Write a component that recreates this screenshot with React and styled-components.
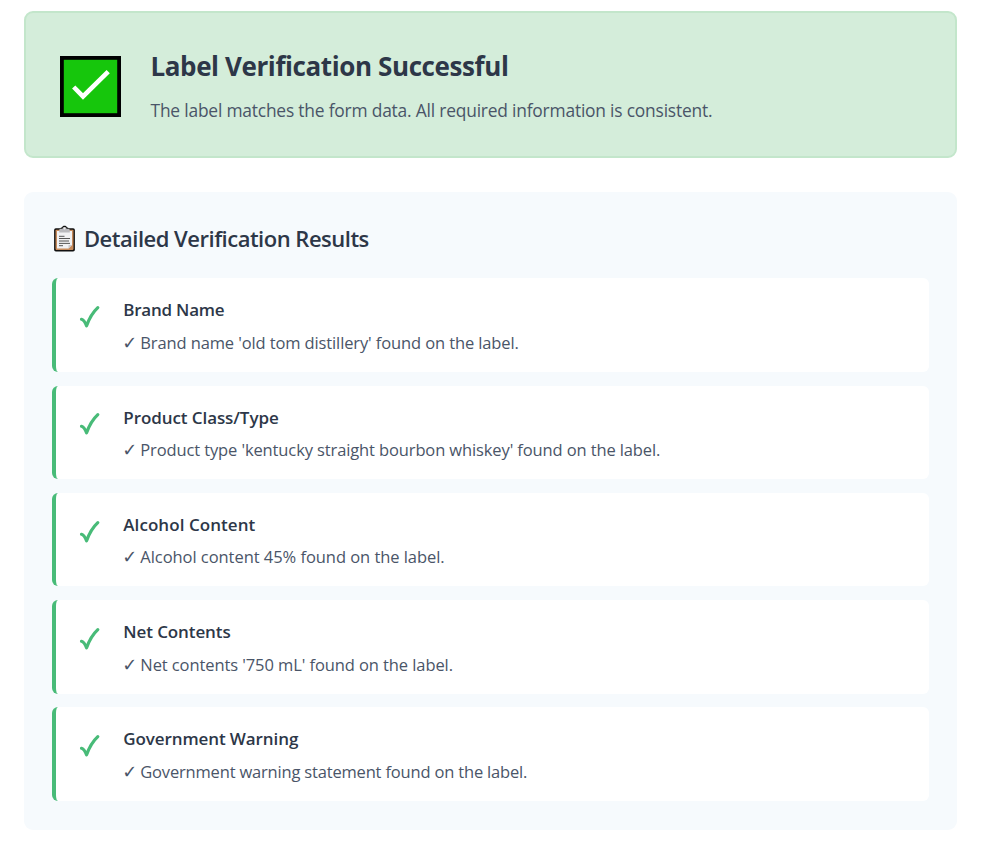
import React from "react";
import styled, { createGlobalStyle } from "styled-components";

const GlobalStyle = createGlobalStyle`
  *, *::before, *::after { box-sizing: border-box; }
  body {
    margin: 0;
    background: #fff;
    font-family: "Segoe UI", "Open Sans", "Noto Sans", sans-serif;
  }
  h2, h3, h4, p { margin: 0; }
`;

const Page = styled.main`
  padding: 11px 29px 22px 24px;
`;

const Banner = styled.section`
  display: flex;
  align-items: center;
  height: 147px;
  padding: 0 34px;
  gap: 29.5px;
  background: #d4edda;
  border: 2px solid #c3e6cb;
  border-radius: 9px;
`;

const BannerIcon = styled.svg`
  width: 61px;
  height: 61px;
  flex: none;
  margin-top: 4px;
`;

const BannerText = styled.div`
  display: flex;
  flex-direction: column;
  gap: 12px;
  padding-top: 2px;
`;

const BannerTitle = styled.h2`
  color: #2d3748;
  font-size: 26px;
  font-weight: 700;
  line-height: 36px;
  letter-spacing: -0.4px;
  white-space: nowrap;
`;

const BannerMessage = styled.p`
  color: #4a5568;
  font-size: 17.4px;
  line-height: 28px;
  letter-spacing: -0.2px;
  white-space: nowrap;
`;

const Results = styled.section`
  margin-top: 34px;
  height: 638px;
  padding: 30px 28px 0;
  background: #f6fafd;
  border-radius: 9px;
`;

const ResultsHeading = styled.h3`
  display: flex;
  align-items: center;
  gap: 8px;
  height: 34px;
  margin-bottom: 22.3px;
  color: #2d3748;
  font-size: 22px;
  font-weight: 600;
  line-height: 32px;
  letter-spacing: -0.5px;
  white-space: nowrap;
`;

const HeadingLabel = styled.span`
  padding-bottom: 2px;
`;

const ClipboardSvg = styled.svg`
  width: 24px;
  height: 28px;
  flex: none;
`;

const ResultList = styled.div`
  display: flex;
  flex-direction: column;
  gap: 13.7px;
`;

const ResultCard = styled.article`
  display: flex;
  height: 93.6px;
  padding: 18px 22px;
  gap: 21.3px;
  background: #fff;
  border-left: 4px solid #48bb78;
  border-radius: 6px;
`;

const CheckSvg = styled.svg`
  width: 24px;
  height: 28px;
  flex: none;
  margin-top: 7.7px;
`;

const ResultTitle = styled.h4`
  color: #2d3748;
  font-size: 17px;
  font-weight: 600;
  line-height: 28px;
  letter-spacing: ${(p) => p.$tracking}px;
  white-space: nowrap;
`;

const ResultMessage = styled.p`
  display: flex;
  margin-top: 4.6px;
  color: #4a5568;
  font-size: 16.5px;
  line-height: 28px;
  letter-spacing: ${(p) => p.$tracking}px;
  white-space: pre;
`;

const Tick = styled.span`
  width: 17px;
  margin-left: -1px;
  margin-right: 1px;
  font-family: "DejaVu Sans", sans-serif;
  font-size: 18px;
`;

const results = [
  ["Brand Name", -0.24, "Brand name 'old tom distillery' found on the label.", -0.12],
  ["Product Class/Type", -0.08, "Product type 'kentucky straight bourbon whiskey' found on the label.", -0.12],
  ["Alcohol Content", 0.06, "Alcohol content 45% found on the label.", -0.05],
  ["Net Contents", -0.1, "Net contents '750 mL' found on the label.", -0.09],
  ["Government Warning", -0.1, "Government warning statement found on the label.", -0.18],
];

function SuccessIcon() {
  return (
    <BannerIcon viewBox="0 0 61 61" aria-hidden="true">
      <rect width="61" height="61" fill="#000" />
      <rect x="3.8" y="3.8" width="53.4" height="53.4" fill="#16c60c" />
      <path d="M13.7 31 23 40.4 48.2 15.6" fill="none" stroke="#fff" strokeWidth="4.6" />
    </BannerIcon>
  );
}

function Clipboard() {
  return (
    <ClipboardSvg viewBox="0 0 24 28" aria-hidden="true">
      <rect x="2.1" y="3.2" width="20.8" height="23.3" rx="1.8" fill="#111" />
      <path d="M8.3 4c0-1.2.8-1.7 1.9-1.8C10.7.4 14.3.4 14.8 2.2c1.1.1 1.9.6 1.9 1.8z" fill="#111" />
      <rect x="3.5" y="4.7" width="18" height="20.2" rx=".8" fill="#c68a5b" />
      <path d="M5 6h15v14l-3.5 3.6H5z" fill="#f1f1f3" />
      <path d="M20 20h-3.5v3.6z" fill="#c9c9ce" />
      <path d="M7.2 7.4V5.2c0-1 .7-1.5 1.8-1.5h1.5c.2-2.4 3.8-2.4 4 0H16c1.1 0 1.8.5 1.8 1.5v2.2z" fill="#b9b9bd" />
      <circle cx="12.5" cy="3.4" r="1" fill="#eee" />
      <path d="M7 11.3h5.5M7 13.5h11M7 16h10M7 18.4h11M7 20.7h4" stroke="#555" strokeWidth="1" />
    </ClipboardSvg>
  );
}

function CheckIcon() {
  return (
    <CheckSvg viewBox="0 0 24 28" aria-hidden="true">
      <path
        d="M3.5 15.3C5.3 15.7 7.2 18.5 8.6 21.8C11 15 14.5 8.5 19.8 3.6"
        fill="none"
        stroke="#48bb78"
        strokeWidth="3.2"
        strokeLinecap="round"
        strokeLinejoin="round"
      />
    </CheckSvg>
  );
}

export default function App() {
  return (
    <>
      <GlobalStyle />
      <Page>
        <Banner>
          <SuccessIcon />
          <BannerText>
            <BannerTitle>Label Verification Successful</BannerTitle>
            <BannerMessage>
              The label matches the form data. All required information is consistent.
            </BannerMessage>
          </BannerText>
        </Banner>
        <Results>
          <ResultsHeading>
            <Clipboard />
            <HeadingLabel>Detailed Verification Results</HeadingLabel>
          </ResultsHeading>
          <ResultList>
            {results.map(([title, titleTracking, message, messageTracking]) => (
              <ResultCard key={title}>
                <CheckIcon />
                <div>
                  <ResultTitle $tracking={titleTracking}>{title}</ResultTitle>
                  <ResultMessage $tracking={messageTracking}>
                    <Tick>✓</Tick>
                    <span>{message}</span>
                  </ResultMessage>
                </div>
              </ResultCard>
            ))}
          </ResultList>
        </Results>
      </Page>
    </>
  );
}
